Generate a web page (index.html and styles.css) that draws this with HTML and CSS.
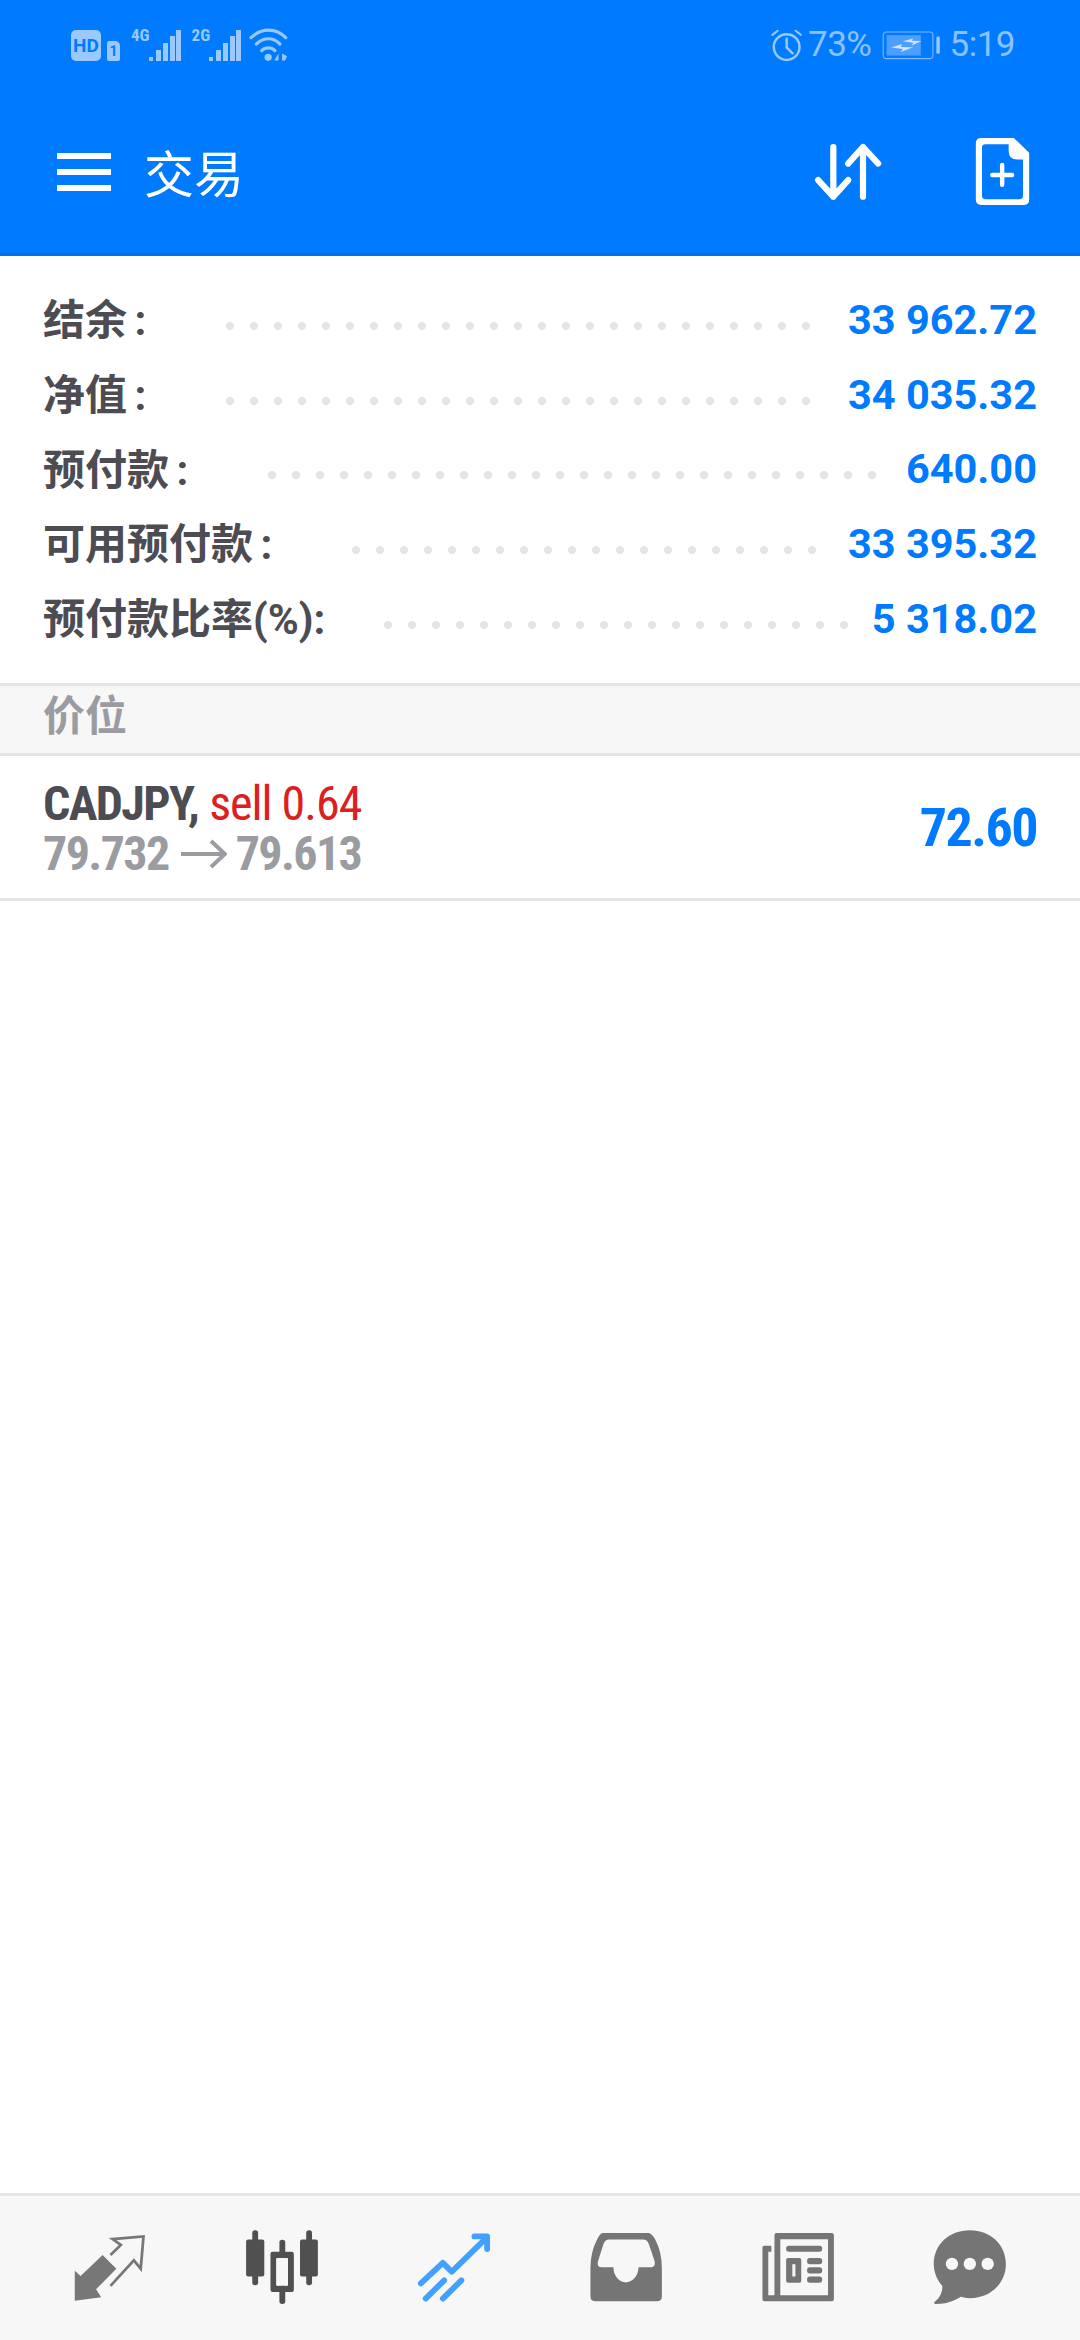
FILE: index.html
```html
<!DOCTYPE html>
<html>
<head>
<meta charset="UTF-8">
<title>交易</title>
<link rel="stylesheet" href="styles.css">
</head>
<body>
<div class="page">

	<header class="top">
		<div class="status">
			<div class="status-left">
				<span class="hd">HD</span>
				<span class="sim">1</span>
				<span class="net">4G</span>
				<svg class="signal" viewBox="0 0 33 31"><path d="M1 27h4v4H1zM8 20h5v11H8zM15 13h5v18h-5zM22 6h5v25h-5zM28 0h5v31h-5z" fill="#99c9ff"/></svg>
				<span class="net">2G</span>
				<svg class="signal" viewBox="0 0 33 31"><path d="M1 27h4v4H1zM8 20h5v11H8zM15 13h5v18h-5zM22 6h5v25h-5zM28 0h5v31h-5z" fill="#99c9ff"/></svg>
				<svg class="wifi" viewBox="730 85 108 95">
					<g fill="none" stroke="#99c9ff" stroke-width="9" stroke-linecap="round">
						<path d="M735 112C765 84 805 84 832 112"/>
						<path d="M750 130C770 110 798 110 816 130"/>
						<path d="M765 148C775 138 792 138 802 148"/>
					</g>
					<circle cx="783" cy="167" r="10" fill="#99c9ff"/>
					<path d="M812 156v20h-12zM822 156l14 8-6 12h-8z" fill="#99c9ff"/>
				</svg>
			</div>
			<div class="status-right">
				<svg class="alarm" viewBox="675 85 92 95">
					<g fill="none" stroke="#99c9ff" stroke-linecap="round">
						<circle cx="720" cy="137" r="37" stroke-width="7"/>
						<path d="M720 112v26l17 17" stroke-width="7"/>
						<path d="M679 102l15-12M761 102l-15-12" stroke-width="6"/>
					</g>
				</svg>
				<span class="status-text">73%</span>
				<svg class="battery" viewBox="990 92 170 84">
					<rect x="993" y="95" width="144" height="77" rx="9" fill="none" stroke="#80bcff" stroke-width="3"/>
					<rect x="1003" y="104" width="99" height="59" fill="#4d9fff"/>
					<rect x="1147" y="108" width="10" height="50" rx="4" fill="#99c9ff"/>
					<path d="M1016 140l32-10-4 8 36 1-36 14 6-9zM1050 122l30-8-4 6 28 1-28 13 4-8z" fill="#cfe5ff"/>
				</svg>
				<span class="status-text">5:19</span>
			</div>
		</div>
		<div class="toolbar">
			<div class="burger"><span></span><span></span><span></span></div>
			<div class="title">交易</div>
			<svg class="sort" viewBox="790 430 200 170">
				<g fill="none" stroke="#fff" stroke-width="18" stroke-linecap="round" stroke-linejoin="round">
					<path d="M846 444V588M802 540L846 588L889 540"/>
					<path d="M932 588V444M889 492L932 444L976 492"/>
				</g>
			</svg>
			<svg class="newfile" viewBox="1264 417 156 196">
				<path fill="#fff" fill-rule="evenodd" d="M1280 417H1375L1420 460V598Q1420 613 1405 613H1280Q1264 613 1264 598V432Q1264 417 1280 417ZM1292 435Q1282 435 1282 445V585Q1282 596 1292 596H1392Q1402 596 1402 585V480H1385Q1360 480 1360 455V435Z"/>
				<path d="M1341 496V554M1312 525H1370" stroke="#fff" stroke-width="13" stroke-linecap="round"/>
			</svg>
		</div>
	</header>

	<main class="content">
		<section class="summary">
			<div class="summary-row">
				<span class="summary-label">结余 :</span><span class="leader"></span><span class="summary-value">33 962.72</span>
			</div>
			<div class="summary-row">
				<span class="summary-label">净值 :</span><span class="leader"></span><span class="summary-value">34 035.32</span>
			</div>
			<div class="summary-row">
				<span class="summary-label">预付款 :</span><span class="leader"></span><span class="summary-value">640.00</span>
			</div>
			<div class="summary-row">
				<span class="summary-label">可用预付款 :</span><span class="leader"></span><span class="summary-value">33 395.32</span>
			</div>
			<div class="summary-row">
				<span class="summary-label">预付款比率(%):</span><span class="leader leader-near"></span><span class="summary-value">5 318.02</span>
			</div>
		</section>

		<div class="section-head">价位</div>

		<div class="trade">
			<div class="trade-info">
				<div class="trade-line"><span class="symbol">CADJPY,</span> <span class="side">sell 0.64</span></div>
				<div class="trade-line prices">79.732<svg class="arrow" viewBox="0 0 46 30"><path d="M0 15H44M30 2L44 15L30 28" fill="none" stroke="#9b9ca1" stroke-width="4"/></svg>79.613</div>
			</div>
			<div class="profit">72.60</div>
		</div>
	</main>

	<nav class="tabs">
		<div class="tab">
			<svg class="tab-icon" viewBox="205 150 230 220">
				<path fill="#777" d="M216 268L233 283L297 222L337 262L278 322L293 345L216 355Z"/>
				<path fill="none" stroke="#777" stroke-width="8" d="M320 222L350 193L326 176L416 168L408 262L388 238L320 312"/>
			</svg>
		</div>
		<div class="tab">
			<svg class="tab-icon" viewBox="705 150 230 220">
				<g fill="#505050">
					<rect x="732" y="150" width="17" height="160" rx="8"/>
					<rect x="714" y="177" width="53" height="108" rx="6"/>
					<rect x="889" y="150" width="17" height="160" rx="8"/>
					<rect x="871" y="177" width="52" height="108" rx="6"/>
					<rect x="811" y="178" width="17" height="187" rx="8"/>
					<path fill-rule="evenodd" d="M791 213H847Q853 213 853 219V324Q853 330 847 330H791Q785 330 785 324V219Q785 213 791 213ZM806 231Q802 231 802 235V308Q802 312 806 312H832Q836 312 836 308V235Q836 231 832 231Z"/>
				</g>
				<rect x="802" y="231" width="34" height="81" rx="4" fill="#f7f7f7"/>
			</svg>
		</div>
		<div class="tab">
			<svg class="tab-icon" viewBox="1205 150 230 220">
				<g fill="none" stroke="#42a0ff" stroke-width="17" stroke-linecap="round" stroke-linejoin="round">
					<path d="M1222 305L1286 245L1312 271L1410 175"/>
					<path d="M1378 168H1415V205"/>
					<path d="M1236 349L1290 296"/>
					<path d="M1286 349L1340 296"/>
				</g>
			</svg>
		</div>
		<div class="tab">
			<svg class="tab-icon" viewBox="135 150 230 220">
				<path fill="#757575" fill-rule="evenodd" d="M180 158H315Q325 160 335 180Q353 215 353 260V342Q353 357 338 357H160Q145 357 145 342V260Q145 215 163 180Q172 160 180 158ZM200 177Q188 177 183 190L167 240Q163 258 178 258H212C212 285 230 302 248 302C265 302 285 285 285 258H320Q335 258 332 240L315 190Q310 177 298 177Z"/>
			</svg>
		</div>
		<div class="tab">
			<svg class="tab-icon" viewBox="635 150 230 220">
				<g fill="#757575">
					<path fill-rule="evenodd" d="M686 158H847Q853 158 853 164V351Q853 357 847 357H651Q645 357 645 351V201Q645 195 651 195H671V213H662V339H680V164Q680 158 686 158ZM697 176V339H836V176Z"/>
					<rect x="714" y="195" width="105" height="18" rx="8"/>
					<path fill-rule="evenodd" d="M720 231H752Q758 231 758 237V297Q758 303 752 303H720Q714 303 714 297V237Q714 231 720 231ZM732 249V285H741V249Z"/>
					<rect x="775" y="231" width="44" height="18" rx="8"/>
					<rect x="775" y="258" width="44" height="18" rx="8"/>
					<rect x="775" y="285" width="44" height="18" rx="8"/>
				</g>
			</svg>
		</div>
		<div class="tab">
			<svg class="tab-icon" viewBox="1135 150 230 220">
				<path fill="#757575" d="M1248 150C1308 150 1353 192 1353 248C1353 304 1308 348 1248 348Q1233 348 1222 344C1200 358 1175 366 1146 365L1144 360C1157 350 1169 335 1168 312C1153 295 1143 272 1143 248C1143 192 1188 150 1248 150Z"/>
				<g fill="#f7f7f7">
					<circle cx="1196" cy="248" r="18"/>
					<circle cx="1248" cy="248" r="18"/>
					<circle cx="1300" cy="248" r="18"/>
				</g>
			</svg>
		</div>
	</nav>

</div>
</body>
</html>
```

FILE: styles.css
```css
*
{
	box-sizing: border-box;
}

body
{
	margin: 0;
	background-color: #ffffff;
	font-family: Roboto, "Noto Sans CJK SC", sans-serif;
}

.page
{
	display: flex;
	flex-direction: column;
	width: 1080px;
	height: 2340px;
}

/* blue header */

.top
{
	height: 256px;
	background-color: #007aff;
	border-bottom: 3px solid #0070ea;
}

.status
{
	display: flex;
	justify-content: space-between;
	align-items: center;
	height: 90px;
	padding: 0 65px 0 71px;
}

.status-left,
.status-right
{
	display: flex;
	align-items: center;
}

.hd
{
	width: 30px;
	height: 31px;
	border-radius: 5px;
	background-color: #99c9ff;
	color: #007aff;
	font-size: 19px;
	font-weight: 700;
	line-height: 31px;
	text-align: center;
}

.sim
{
	width: 13px;
	height: 20px;
	margin: 11px 0 0 6px;
	border-radius: 2px 5px 2px 2px;
	background-color: #99c9ff;
	color: #007aff;
	font-size: 14px;
	font-weight: 700;
	line-height: 20px;
	text-align: center;
}

.net
{
	align-self: flex-start;
	margin: -1px -2px 0 11px;
	color: #99c9ff;
	font-size: 17px;
	font-weight: 700;
	font-stretch: 75%;
	line-height: 17px;
}

.signal
{
	width: 33px;
	height: 31px;
}

.wifi
{
	width: 39px;
	height: 34px;
	margin-left: 8px;
}

.alarm
{
	width: 32px;
	height: 33px;
}

.status-text
{
	margin-left: 5px;
	color: #8cc3ff;
	font-size: 35px;
	font-weight: 400;
	letter-spacing: -0.5px;
	line-height: 40px;
}

.battery
{
	width: 59px;
	height: 29px;
	margin-left: 10px;
}

.battery + .status-text
{
	margin-left: 9px;
}

.toolbar
{
	display: flex;
	align-items: center;
	height: 163px;
	padding: 0 50px 0 57px;
}

.burger
{
	display: flex;
	flex-direction: column;
	gap: 10px;
	width: 54px;
}

.burger span
{
	height: 6px;
	background-color: #ffffff;
}

.title
{
	flex: 1;
	margin-left: 33px;
	padding-top: 9px;
	color: #ffffff;
	font-size: 50px;
	line-height: 60px;
}

.sort
{
	width: 69px;
	height: 59px;
}

.newfile
{
	width: 55px;
	height: 67px;
	margin-left: 92px;
}

/* account summary */

.content
{
	flex: 1;
}

.summary
{
	height: 427px;
	padding-top: 26px;
}

.summary-row
{
	display: flex;
	align-items: center;
	height: 74.7px;
	padding: 0 43px 0 43px;
}

.summary-label
{
	padding-bottom: 5px;
	color: #4c4c52;
	font-size: 42px;
	font-weight: 700;
	word-spacing: -3px;
	white-space: nowrap;
}

.leader
{
	flex: 1;
	height: 24px;
	margin: 13px 22px 0 72px;
	background-image: radial-gradient(circle, #e5e5e5 3.8px, transparent 4.3px);
	background-size: 24px 24px;
	background-repeat: repeat-x;
}

.leader-near
{
	margin-left: 51px;
}

.summary-value
{
	color: #007aff;
	font-size: 41.5px;
	font-weight: 700;
	white-space: nowrap;
}

.section-head
{
	height: 73px;
	padding-left: 43px;
	background-color: #f7f7f7;
	border-top: 3px solid #e5e5e5;
	border-bottom: 3px solid #e5e5e5;
	color: #9b9ca1;
	font-size: 42px;
	font-weight: 700;
	line-height: 62px;
}

/* open position */

.trade
{
	display: flex;
	justify-content: space-between;
	align-items: center;
	height: 145px;
	padding: 0 43px;
	border-bottom: 3px solid #e5e5e5;
}

.trade-info
{
	padding-top: 4px;
}

.trade-line
{
	font-size: 48px;
	font-stretch: 75%;
	line-height: 50px;
	white-space: nowrap;
}

.symbol
{
	color: #4c4c52;
	font-weight: 700;
	letter-spacing: -1.6px;
}

.side
{
	color: #dc2020;
	letter-spacing: -1px;
}

.prices
{
	display: flex;
	align-items: center;
	color: #9b9ca1;
	font-weight: 700;
	letter-spacing: -1.6px;
}

.arrow
{
	width: 46px;
	height: 30px;
	margin: 0 9px 0 12px;
}

.profit
{
	color: #007aff;
	font-size: 54px;
	font-weight: 700;
	font-stretch: 75%;
	letter-spacing: -1.5px;
}

/* bottom tabs */

.tabs
{
	display: grid;
	grid-template-columns: repeat(6, 1fr);
	height: 147px;
	padding: 0 24px;
	background-color: #f7f7f7;
	border-top: 3px solid #e5e5e5;
}

.tab
{
	display: flex;
	justify-content: center;
	align-items: center;
}

.tab-icon
{
	width: 79px;
	height: 76px;
}
```
